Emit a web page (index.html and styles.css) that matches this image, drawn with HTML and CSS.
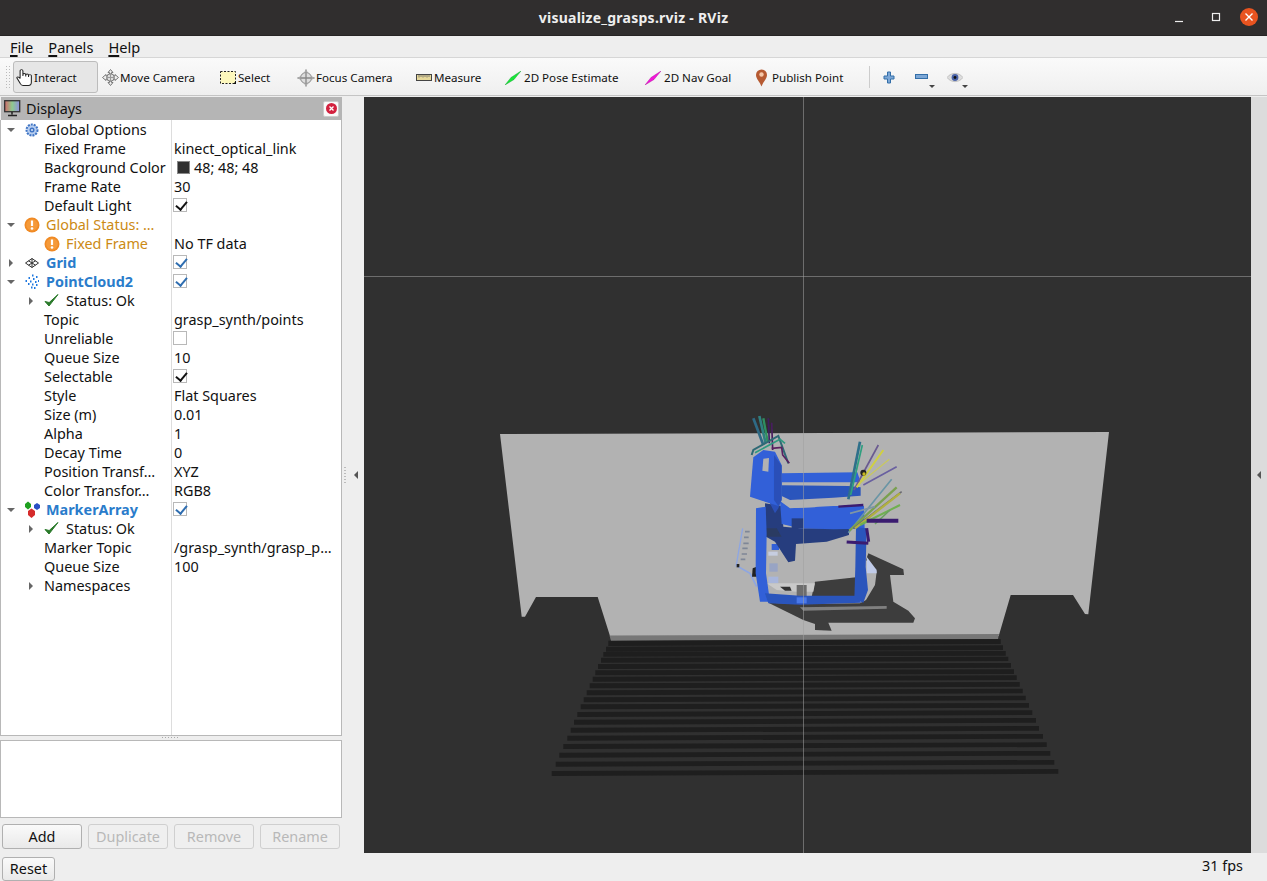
FILE: index.html
```html
<!DOCTYPE html>
<html lang="en">
<head>
<meta charset="utf-8">
<title>visualize_grasps.rviz - RViz</title>
<link rel="stylesheet" href="styles.css">
</head>
<body>
<header class="titlebar">
  <span class="title">visualize_grasps.rviz - RViz</span>
  <div class="winctl">
    <svg class="wbtn" width="12" height="12" viewBox="0 0 12 12"><path d="M1 10.500h8" stroke="#eee" stroke-width="1.200"/></svg>
    <svg class="wbtn" width="12" height="12" viewBox="0 0 12 12"><rect x="2.500" y="2.500" width="7" height="7" fill="none" stroke="#eee" stroke-width="1.200"/></svg>
    <svg class="wclose" width="18" height="18" viewBox="0 0 18 18"><circle cx="9" cy="9" r="9" fill="#e95420"/><path d="M5.500 5.500l7 7M12.500 5.500l-7 7" stroke="#fff" stroke-width="1.400"/></svg>
  </div>
</header>
<nav class="menubar">
  <span><u>F</u>ile</span><span><u>P</u>anels</span><span><u>H</u>elp</span>
</nav>
<div class="toolbar">
  <div class="grip"></div>
  <div class="tool active t1">
    <svg width="17" height="17" viewBox="0 0 14.500 16" preserveAspectRatio="none"><path d="M3.500 9V1.800a1.200 1.200 0 0 1 2.400 0V6.500V5.500a1.200 1.200 0 0 1 2.400 0V7V6a1.200 1.200 0 0 1 2.400 0V7.500V6.500a1.200 1.200 0 0 1 2.400 0V12.500q0 3-2.500 3H6q-1.500 0-2.500-2L.8 8.500c-.5-1.200 1.500-1.800 2.700.5z" fill="#fff" stroke="#222" stroke-width=".9"/></svg>
    <span>Interact</span>
  </div>
  <div class="tool t2">
    <svg width="17" height="17" viewBox="0 0 17 17"><path d="M8.500.5l2.500 3H9.500v3.500H13V5.500l3.500 3-3.500 3V10H9.500v3.500H11l-2.500 3-2.500-3h1.500V10H4v1.500L.5 8.500 4 5.500V7h3.500V3.500H6z" fill="#eee" stroke="#777" stroke-width="1"/><circle cx="8.500" cy="8.500" r="3.800" fill="#ddd" stroke="#777"/><path d="M8.500 5v7M5 8.500h7" stroke="#999"/></svg>
    <span>Move Camera</span>
  </div>
  <div class="tool t3">
    <svg width="17" height="14" viewBox="0 0 17 14"><rect x=".5" y=".5" width="15" height="12" fill="#fdf8bd" stroke="#222" stroke-dasharray="2 1.500"/><path d="M13 13l3-3v3z" fill="#111"/></svg>
    <span>Select</span>
  </div>
  <div class="tool t4">
    <svg width="18" height="18" viewBox="0 0 18 18"><circle cx="9" cy="9" r="5.500" fill="#ddd" stroke="#888"/><path d="M9 .5v17M.5 9h17M5 9h8M9 5v8" stroke="#888" stroke-width="1.300"/><path d="M9 .5l2 3H7zM9 17.500l2-3H7zM.5 9l3-2v4zM17.500 9l-3-2v4z" fill="#aaa"/></svg>
    <span>Focus Camera</span>
  </div>
  <div class="tool t5">
    <svg width="16" height="8" viewBox="0 0 16 8"><rect x=".5" y=".5" width="15" height="6" fill="#e6d89a" stroke="#444"/><path d="M3 1v2.500M5 1v2M7 1v2.500M9 1v2M11 1v2.500M13 1v2" stroke="#666" stroke-width=".8"/></svg>
    <span>Measure</span>
  </div>
  <div class="tool t6">
    <svg width="16" height="14" viewBox="0 0 16 14"><path d="M0 14L6 6.500 16 0 9 8.500z" fill="#19e639" stroke="#0f9c2a" stroke-width=".4"/></svg>
    <span>2D Pose Estimate</span>
  </div>
  <div class="tool t7">
    <svg width="16" height="14" viewBox="0 0 16 14"><path d="M0 14L6 6.500 16 0 9 8.500z" fill="#f216d8" stroke="#a80c94" stroke-width=".4"/></svg>
    <span>2D Nav Goal</span>
  </div>
  <div class="tool t8">
    <svg width="13" height="18" viewBox="0 0 13 18"><path d="M6.500 17.500C5 13 1 10 1 6a5.500 5.500 0 0 1 11 0c0 4-4 7-5.500 11.500z" fill="#b65a32"/><circle cx="6.500" cy="5.500" r="2.200" fill="#f6c7a8"/></svg>
    <span>Publish Point</span>
  </div>
  <div class="tsep"></div>
  <svg class="tplus" width="12" height="13" viewBox="0 0 12 13"><path d="M4.500 1h3v4h3.500v3H7.500v4h-3V8H1V5h3.500z" fill="#7ca7d6" stroke="#336ea8"/></svg>
  <div class="tdrop">
    <svg width="13" height="6" viewBox="0 0 13 6"><rect x=".5" y=".5" width="12" height="4" fill="#7ca7d6" stroke="#336ea8"/></svg>
    <i class="caret"></i>
  </div>
  <div class="tdrop eye">
    <svg width="16" height="11" viewBox="0 0 16 11"><path d="M0 5.500C4 0 12 0 16 5.500 12 11 4 11 0 5.500z" fill="#ddd" stroke="#aaa" stroke-width=".6"/><circle cx="8" cy="5.500" r="3.400" fill="#4a63a8"/><circle cx="8" cy="5.500" r="1.400" fill="#111"/></svg>
    <i class="caret"></i>
  </div>
</div>
<main class="main">
  <aside class="left">
    <div class="docktitle">
      <svg width="17" height="17" viewBox="0 0 17 17"><defs><linearGradient id="scr" x1="0" x2="1" y1="0" y2="0"><stop offset="0" stop-color="#d36a6a"/><stop offset=".5" stop-color="#8fc98f"/><stop offset="1" stop-color="#8f8fe0"/></linearGradient></defs><rect x=".7" y=".7" width="15" height="11" fill="url(#scr)" stroke="#333" stroke-width="1.300"/><path d="M8 12v2.500M4 15.500h9" stroke="#222" stroke-width="1.500"/></svg>
      <span class="docklabel">Displays</span>
      <span class="dockclose"><svg width="11" height="11" viewBox="0 0 11 11"><circle cx="5.500" cy="5.500" r="5.500" fill="#d3213f"/><path d="M3.500 3.500l4 4M7.500 3.500l-4 4" stroke="#fff" stroke-width="1.300"/></svg></span>
    </div>
    <div class="tree">
      <div class="row"><div class="c1"><i class="arr open l0"></i><svg class="ico" width="16" height="16" viewBox="0 0 16 16"><circle cx="8" cy="8" r="5.500" fill="#b6cdef" stroke="#3f74c4" stroke-width="2" stroke-dasharray="2 1"/><circle cx="8" cy="8" r="2.500" fill="#3f74c4"/><circle cx="8" cy="8" r="1" fill="#dbe7f8"/></svg><span class="lbl">Global Options</span></div></div>
      <div class="row"><div class="c1 i1">Fixed Frame</div><div class="c2">kinect_optical_link</div></div>
      <div class="row"><div class="c1 i1">Background Color</div><div class="c2"><i class="swatch"></i>48; 48; 48</div></div>
      <div class="row"><div class="c1 i1">Frame Rate</div><div class="c2">30</div></div>
      <div class="row"><div class="c1 i1">Default Light</div><div class="c2"><i class="cb on"></i></div></div>
      <div class="row warn"><div class="c1"><i class="arr open l0"></i><svg class="ico warnico" width="16" height="16" viewBox="0 0 16 16"><circle cx="8" cy="8" r="7.500" fill="#f08a24"/><circle cx="8" cy="8" r="5.800" fill="#f59a3a"/><path d="M8 3.500v5.500" stroke="#fff" stroke-width="2.200"/><circle cx="8" cy="11.500" r="1.300" fill="#fff"/></svg><span class="lbl">Global Status: …</span></div></div>
      <div class="row"><div class="c1 i2 warn"><svg class="ico warnico" width="16" height="16" viewBox="0 0 16 16"><circle cx="8" cy="8" r="7.500" fill="#f08a24"/><circle cx="8" cy="8" r="5.800" fill="#f59a3a"/><path d="M8 3.500v5.500" stroke="#fff" stroke-width="2.200"/><circle cx="8" cy="11.500" r="1.300" fill="#fff"/></svg><span class="lbl">Fixed Frame</span></div><div class="c2">No TF data</div></div>
      <div class="row blue"><div class="c1"><i class="arr l0"></i><svg class="ico" width="16" height="16" viewBox="0 0 16 16"><path d="M8 3.500L14.500 8 8 12.500 1.500 8zM8 3.500v9M4.500 5.800L11.500 10.200M11.500 5.800L4.500 10.200" fill="#fff" stroke="#333" stroke-width="1"/></svg><span class="lbl">Grid</span></div><div class="c2"><i class="cb on b"></i></div></div>
      <div class="row blue"><div class="c1"><i class="arr open l0"></i><svg class="ico" width="16" height="16" viewBox="0 0 16 16"><path d="M8 1.500h1.500M12 3h1.500M4.500 4h1.500M9 5h1.500M1.500 7h1.500M6 7.500h1.500M11 8h1.500M14 7h1M4 10h1.500M8 10.500h1.500M12 11h1.500M7 13.500h1.500M10 14h1.500" stroke="#1f78e0" stroke-width="2" fill="none"/></svg><span class="lbl">PointCloud2</span></div><div class="c2"><i class="cb on b"></i></div></div>
      <div class="row"><div class="c1 i2"><i class="arr l1"></i><svg class="ico" width="15" height="15" viewBox="0 0 15 15"><path d="M1 8.500l4 4.500L14 1.500 5.200 9.500z" fill="#2a7a2a" stroke="#2a7a2a"/></svg><span class="lbl">Status: Ok</span></div></div>
      <div class="row"><div class="c1 i1">Topic</div><div class="c2">grasp_synth/points</div></div>
      <div class="row"><div class="c1 i1">Unreliable</div><div class="c2"><i class="cb"></i></div></div>
      <div class="row"><div class="c1 i1">Queue Size</div><div class="c2">10</div></div>
      <div class="row"><div class="c1 i1">Selectable</div><div class="c2"><i class="cb on"></i></div></div>
      <div class="row"><div class="c1 i1">Style</div><div class="c2">Flat Squares</div></div>
      <div class="row"><div class="c1 i1">Size (m)</div><div class="c2">0.01</div></div>
      <div class="row"><div class="c1 i1">Alpha</div><div class="c2">1</div></div>
      <div class="row"><div class="c1 i1">Decay Time</div><div class="c2">0</div></div>
      <div class="row"><div class="c1 i1">Position Transf…</div><div class="c2">XYZ</div></div>
      <div class="row"><div class="c1 i1">Color Transfor…</div><div class="c2">RGB8</div></div>
      <div class="row blue"><div class="c1"><i class="arr open l0"></i><svg class="ico wide" width="18" height="18" viewBox="0 0 18 18"><path d="M2 3l3-2.500 3 2.500v3l-3 2.500-3-2.500z" fill="#1fa01f"/><path d="M11 4l3-2 3 2v3l-3 2-3-2z" fill="#2a4fc4"/><path d="M5 10l3.500-2.500L12 10v4l-3.500 3L5 14z" fill="#d62b2b"/></svg><span class="lbl">MarkerArray</span></div><div class="c2"><i class="cb on b"></i></div></div>
      <div class="row"><div class="c1 i2"><i class="arr l1"></i><svg class="ico" width="15" height="15" viewBox="0 0 15 15"><path d="M1 8.500l4 4.500L14 1.500 5.200 9.500z" fill="#2a7a2a" stroke="#2a7a2a"/></svg><span class="lbl">Status: Ok</span></div></div>
      <div class="row"><div class="c1 i1">Marker Topic</div><div class="c2">/grasp_synth/grasp_p…</div></div>
      <div class="row"><div class="c1 i1">Queue Size</div><div class="c2">100</div></div>
      <div class="row"><div class="c1 i1"><i class="arr l1"></i>Namespaces</div></div>
    </div>
    <div class="hsplit"><i></i></div>
    <div class="logbox"></div>
    <div class="btnrow">
      <button class="btn">Add</button>
      <button class="btn" disabled>Duplicate</button>
      <button class="btn" disabled>Remove</button>
      <button class="btn" disabled>Rename</button>
    </div>
  </aside>
  <div class="vsplit"><span class="dots"></span><i class="larrow"></i></div>
  <section class="view">
    <svg class="scene" width="887" height="756" viewBox="364 97 887 756">
      <defs><filter id="soft" x="-5%" y="-5%" width="110%" height="110%"><feGaussianBlur stdDeviation="0.6"/></filter></defs>
      <polygon fill="#b2b2b2" points="500,434 1109,432 1088.300,614.300 1085,614 1073,595 1010.700,595 998.700,636 610,636 597.700,597 536,597 525,616.700 521.700,616.700"/>
      <polygon fill="#777" points="609.500,635.500 999,634 998,639 611,641"/>
      <g fill="#1e1e1e">
        <polygon points="608.300,640.700 1000.700,639 1000.700,644 608.300,646"/>
        <polygon points="606,646.700 1003,645.300 1003,650 606,651.700"/>
        <polygon points="603.300,652 1005.700,651 1005.700,655.700 603.300,656.700"/>
        <polygon points="601,657.700 1008.300,656.700 1008.300,661 601,662.700"/>
        <polygon points="598,664 1011,663 1011,667.700 598,669"/>
        <polygon points="595.300,670.300 1014,669.300 1014,674 595.300,675.300"/>
        <polygon points="592.700,676.700 1016.700,675.300 1016.700,680 592.700,681.700"/>
        <polygon points="589.700,683.300 1019.700,682 1019.700,686.700 589.700,688.300"/>
        <polygon points="586.700,690.300 1022.700,688.700 1022.700,693.300 586.700,695.300"/>
        <polygon points="583.700,697.300 1025.700,695.700 1025.700,700.300 583.700,702.300"/>
        <polygon points="580.700,704.300 1029,703 1029,707.700 580.700,709.300"/>
        <polygon points="577.300,712 1032.300,710.300 1032.300,715 577.300,717"/>
        <polygon points="574,719.700 1036,718 1036,722.700 574,724.700"/>
        <polygon points="570.700,727.700 1039,726 1039,730.700 570.700,732.700"/>
        <polygon points="567.300,735.700 1043,734 1043,738.700 567.300,740.700"/>
        <polygon points="563.300,744 1046.700,742.300 1046.700,747 563.300,749"/>
        <polygon points="559.300,752.700 1050.300,751 1050.300,755.700 559.300,757.700"/>
        <polygon points="555.700,761.700 1054.300,760 1054.300,764.700 555.700,766.700"/>
        <polygon points="551.700,771 1058.300,769 1058.300,773.700 551.700,776"/>
      </g>
      <g transform="translate(700 400) scale(.33333)" filter="url(#soft)">
        <!-- shadow -->
        <path fill="#3d3d3d" d="M205 608L310 660 345 672 345 690 395 692 385 668 640 668 645 655 625 632 580 605 570 525 612 525 610 508 505 460 498 480 530 515 525 555 498 600 480 610 300 612z"/>
        <path fill="#3d3d3d" d="M345 545L468 532 468 590 335 590z"/>
        <path fill="#808080" d="M300 622L560 618 560 626 310 632z"/>
        <!-- pale scattered points -->
        <g fill="none" stroke="#8ea6e2" stroke-width="5">
          <path d="M128 385l-20 115" stroke-width="4"/>
          <path d="M135 395h14M132 412h14M130 430h16M127 445h16M125 462h16M122 478h14" stroke="#7f8797" stroke-width="5"/>
          <path d="M115 500l35 20 20 40"/>
        </g>
        <rect x="110" y="492" width="8" height="10" fill="#222"/>
        <path d="M158 505l12-5v30h-14z" fill="#222"/>
        <path d="M208 490h25v25h-25z" fill="#98a4c4"/>
        <path d="M205 455h28v12h-28z" fill="#c6cde0"/>
        <path d="M215 432h22v18h-22z" fill="#3060d8"/>
        <path d="M205 530h30v20h-30z" fill="#a8b6dc"/>
        <path d="M500 470l30 40v10h-30z" fill="#c0cbe8"/>
        <path d="M200 550h145l-5 25h-50l-60-5z" fill="#c9c9c9"/>
        <path d="M290 555h30v35h-30z" fill="#6c6c6c"/>
        <path d="M240 560h30l5 12h-20z" fill="#333"/>
        <!-- back strut / dark -->
        <path fill="#263e7e" d="M195 310L245 318 250 380 300 385 447 385 447 405 380 425 288 432 285 482 265 487 225 425 198 410 197 385z"/>
        <path fill="#2b3a62" d="M198 385h32l15 25h-47z"/>
        <!-- top bars -->
        <path fill="#3060d8" d="M245 220L472 217 482 247 245 247z"/>
        <path fill="#2c54bc" d="M245 256L445 258 482 262 482 287 400 293 270 300 245 288z"/>
        <path fill="#3060d8" d="M240 303L270 325 400 318 492 318 494 386 400 388 300 385 245 372z"/>
        <path fill="#b2b2b2" d="M270 305L395 300 345 322 275 324z"/>
        <path fill="#263e7e" d="M275 355h35v30h-35z"/>
        <!-- legs -->
        <path fill="#3060d8" d="M168 325L197 320 200 400 198 520 210 605 180 605 167 520z"/>
        <path fill="#2c54bc" d="M468 382L500 385 497 500 504 570 490 608 463 598 466 500z"/>
        <path fill="#2c54bc" d="M195 580L300 587 465 587 484 608 300 614 205 610z"/>
        <path fill="#4a78e8" d="M290 592h30v18h-30z"/>
        <!-- back -->
        <path fill="#2a50b8" d="M205 300L245 300 235 325 225 340z"/>
        <path fill="#3060d8" d="M160 172L190 150 225 155 245 195 245 298 235 318 195 305 150 290 155 230z"/>
        <path fill="#2a50b8" d="M222 165L245 197 245 298 235 318 222 300z"/>
        <path fill="#b2b2b2" d="M190 176L207 174 205 215 187 212z"/>
        <!-- grasps -->
        <g fill="none" stroke-width="5">
          <path d="M190 135L160 55" stroke="#2f6a85" stroke-width="8"/>
          <path d="M197 130L178 48" stroke="#2f7f80" stroke-width="8"/>
          <path d="M203 125L190 55" stroke="#2f8f60" stroke-width="7"/>
          <path d="M208 130L205 55" stroke="#3f1f60"/>
          <path d="M218 150L215 68" stroke="#4a1f60"/>
          <path d="M155 165L160 150 235 108 265 190" stroke="#2f6a75" stroke-width="6"/>
          <path d="M165 158L240 118 255 130" stroke="#2f9a80"/>
          <path d="M215 145L245 142 248 165 268 190" stroke="#5a2060"/>
          <path d="M445 298L480 125" stroke="#2e6f8a" stroke-width="8"/>
          <path d="M452 285L487 135" stroke="#2f9f7f" stroke-width="5"/>
          <path d="M462 270L535 135" stroke="#6a5a90" stroke-width="5"/>
          <path d="M470 262L550 150" stroke="#d0d040" stroke-width="6"/>
          <path d="M480 250L568 178" stroke="#c8c860" stroke-width="4"/>
          <path d="M490 255L590 200" stroke="#6a60a0" stroke-width="5"/>
          <path d="M445 398L575 238" stroke="#6a95a5" stroke-width="5"/>
          <path d="M448 392L590 262" stroke="#7aa050" stroke-width="7"/>
          <path d="M460 385L605 275" stroke="#6a6a70"/>
          <path d="M465 385L600 280" stroke="#b0b040" stroke-width="7"/>
          <path d="M480 375L600 315" stroke="#70b050" stroke-width="6"/>
          <path d="M525 372L570 330" stroke="#6aa060"/>
          <path d="M450 340L525 320" stroke="#7f95a5"/>
          <path d="M415 320L490 315" stroke="#3a1a70" stroke-width="7"/>
          <path d="M500 362L595 362" stroke="#3a1a70" stroke-width="12"/>
          <path d="M440 426L505 430M500 385L506 425" stroke="#3a1a70" stroke-width="9"/>
        </g>
        <circle cx="490" cy="218" r="9" fill="#222"/>
        <circle cx="492" cy="222" r="5" fill="#c9b820"/>
      </g>
      <path d="M803.500 97v756" stroke="#a0a0a0" stroke-width="1" opacity=".55"/>
      <path d="M364 276.500h887" stroke="#a0a0a0" stroke-width="1" opacity=".55"/>
    </svg>
  </section>
  <div class="rstrip"><i class="larrow"></i></div>
</main>
<footer class="statusbar">
  <button class="btn reset">Reset</button>
  <span class="fps">31 fps</span>
</footer>
</body>
</html>
```
FILE: styles.css
```css
* { box-sizing: border-box; }
html, body { margin: 0; padding: 0; }
body {
  width: 1267px; height: 881px; overflow: hidden;
  background: #eee; color: #111;
  font-family: "Noto Sans", "Liberation Sans", sans-serif;
  font-size: 14.400px;
  display: flex; flex-direction: column;
}
.titlebar {
  height: 36px; flex: none; background: #302e2e; color: #eee;
  display: flex; align-items: center; justify-content: center; position: relative;
  border-bottom: 1px solid #262424;
}
.title { font-weight: 700; font-size: 14px; letter-spacing: .25px; }
.winctl { position: absolute; right: 9px; top: 8px; display: flex; align-items: center; }
.wbtn { margin-right: 24px; }
.wbtn + .wbtn { margin-right: 18px; }
.menubar {
  height: 22px; flex: none; background: #eee; border-bottom: 1px solid #d6d6d6;
  display: flex; gap: 15px; padding: 0 0 0 10px; align-items: center; font-size: 14.600px;
}
.menubar u { text-decoration-thickness: 1.500px; text-underline-offset: 2px; }
.toolbar {
  height: 38px; flex: none; display: flex; align-items: center; padding-left: 5px;
  background: linear-gradient(#fafafa, #efefef);
  border-bottom: 1px solid #c4c4c4; font-size: 11.600px;
}
.grip {
  width: 6px; height: 24px; margin-right: 2px;
  background-image: radial-gradient(#bbb 0.7px, transparent 0.9px);
  background-size: 3px 3px;
}
.tool { height: 32px; display: flex; align-items: center; gap: 1px; padding: 2px 0 0 3px; flex: none; white-space: nowrap; }
.tool span { color: #111; }
.active { background: #e6e6e6; border: 1px solid #bcbcbc; border-radius: 3px; padding-left: 2px; }
.t1 { width: 85px; margin-right: 1px; }
.t2 { width: 118px; }
.t3 { width: 77px; }
.t4 { width: 119px; }
.t5 { width: 89px; }
.t6 { width: 140px; }
.t7 { width: 110px; }
.t8 { width: 117px; }
.t5 { gap: 2px; }
.t6, .t7, .t8 { gap: 3px; }
.t8 { gap: 4px; }
.tsep { width: 1px; height: 22px; background: #ccc; flex: none; margin-right: 13px; }
.tplus { flex: none; margin: 2px 20px 0 0; }
.tdrop { width: 26px; height: 32px; flex: none; display: flex; align-items: center; position: relative; padding-top: 1px; }
.eye { width: 27px; margin-left: 6px; }
.caret {
  position: absolute; right: 6px; bottom: 5px;
  border-left: 3px solid transparent; border-right: 3px solid transparent; border-top: 3px solid #444;
}
.main { height: 757px; flex: none; display: flex; padding-top: 1px; }
.left { width: 342px; flex: none; display: flex; flex-direction: column; }
.docktitle {
  height: 23px; flex: none; background: #b5b5b5; margin-left: 1px; padding: 0 3px 0 3px;
  display: flex; align-items: center;
}
.docklabel { margin-left: 5px; flex: 1; font-size: 14.400px; }
.dockclose {
  width: 16px; height: 16px; background: #fafafa; border-radius: 2px; border: 1px solid #ccc;
  display: flex; align-items: center; justify-content: center;
}
.tree {
  height: 616px; flex: none;
  border: solid #b8b8b8; border-width: 0 1px 1px 1px;
  background: #fff linear-gradient(#ddd, #ddd) no-repeat 170px 0 / 1px 100%;
}
.row { height: 19px; display: flex; align-items: center; white-space: nowrap; }
.c1 { width: 170px; flex: none; display: flex; align-items: center; position: relative; height: 19px; overflow: hidden; }
.c2 { padding-left: 2px; display: flex; align-items: center; height: 19px; margin-left: 1px; flex: 1; }
.i1 { padding-left: 43px; }
.i2 { padding-left: 43px; }
.arr {
  position: absolute; width: 0; height: 0;
  border-top: 4px solid transparent; border-bottom: 4px solid transparent; border-left: 4px solid #666;
  top: 6px;
}
.arr.open { border-left: 4px solid transparent; border-right: 4px solid transparent; border-top: 4px solid #666; border-bottom: 0; top: 8px; }
.arr.l0 { left: 6px; }
.arr.l0:not(.open) { left: 8px; }
.arr.l1 { left: 28px; }
.ico { flex: none; margin-left: 23px; }
.ico.wide { margin-left: 22px; margin-right: -1px; }
.i2 .ico { margin-left: 0; }
.lbl { margin-left: 6px; }
.i2 .lbl { margin-left: 7px; }
.i2 .warnico { margin-right: -1px; }
.warn .lbl { color: #cc8a14; }
.blue .lbl { color: #2a7ccb; font-weight: 700; }
.swatch { width: 13px; height: 13px; background: #303030; border: 1px solid #888; margin: 0 4px 0 3px; display: inline-block; }
.cb { width: 14px; height: 14px; margin: -1px 0 0 -1px; border: 1px solid #b8b8b8; background: #fff; display: inline-block; position: relative; }
.cb.on::after {
  content: ""; position: absolute; left: 4px; top: 0; width: 5px; height: 9px;
  border: solid #111; border-width: 0 2px 2px 0; transform: rotate(40deg);
}
.cb.b::after { border-color: #2e6db0; }
.hsplit { height: 4px; flex: none; display: flex; justify-content: center; }
.hsplit i { width: 18px; height: 1px; margin-top: 1px; background-image: repeating-linear-gradient(90deg, #aaa 0 1px, transparent 1px 3px); }
.logbox { height: 78px; flex: none; background: #fff; border: 1px solid #b8b8b8; }
.btnrow { display: flex; gap: 6px; padding: 6px 2px 0; }
.btn {
  width: 80px; height: 25px; padding: 0; font: inherit; font-size: 14.400px; color: #111;
  background: linear-gradient(#fafafa, #e9e9e9); border: 1px solid #b0b0b0; border-radius: 3px;
}
.btn:disabled { color: #b8b8b8; background: #efefef; border-color: #cfcfcf; }
.vsplit { width: 22px; flex: none; position: relative; }
.dots {
  position: absolute; left: 2px; top: 370px; width: 2px; height: 16px;
  background-image: repeating-linear-gradient(#bbb 0 1px, transparent 1px 3px);
}
.larrow {
  position: absolute; width: 0; height: 0; top: 374px; left: 12px;
  border-top: 4px solid transparent; border-bottom: 4px solid transparent; border-right: 4px solid #555;
}
.view { width: 887px; height: 756px; flex: none; background: #303030; }
.scene { display: block; }
.rstrip { width: 16px; flex: none; background: #dcdcdc; position: relative; }
.rstrip .larrow { left: 6px; }
.statusbar { flex: 1; display: flex; align-items: center; justify-content: space-between; padding: 0 24px 0 2px; }
.btn.reset { width: 53px; height: 24px; margin-top: 3px; }
.fps { font-size: 14.400px; margin-top: -4px; }
```
